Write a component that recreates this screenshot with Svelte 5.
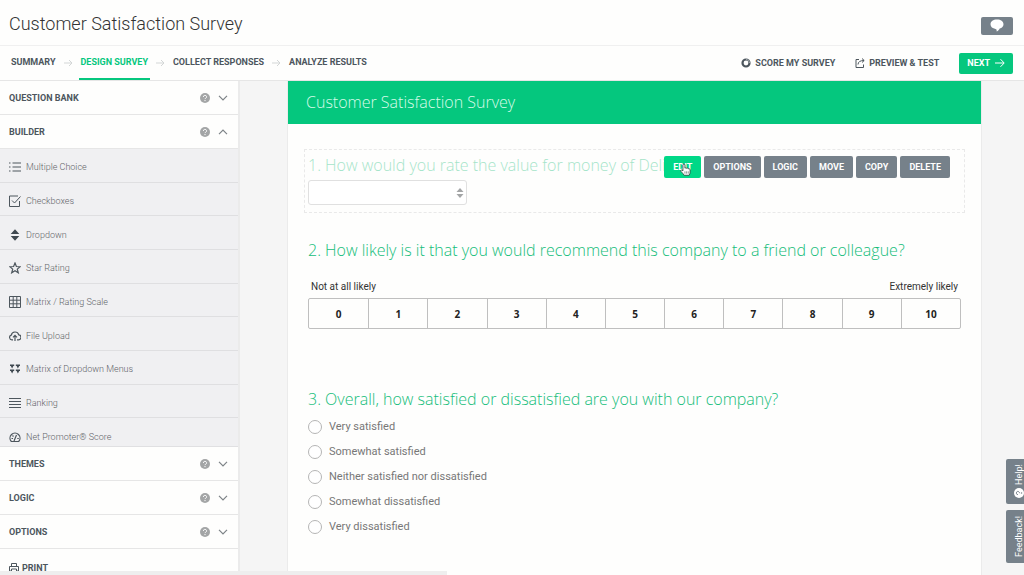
<script lang="ts">
	interface Section {
		id: string;
		title: string;
	}

	let surveyTitle: string = "Customer Satisfaction Survey";
	let steps: string[] = ["Summary", "Design Survey", "Collect Responses", "Analyze Results"];
	let currentStep: string = "Design Survey";

	let questionTypes: Section[] = [
		{ id: "choice", title: "Multiple Choice" },
		{ id: "checkbox", title: "Checkboxes" },
		{ id: "dropdown", title: "Dropdown" },
		{ id: "star", title: "Star Rating" },
		{ id: "matrix", title: "Matrix / Rating Scale" },
		{ id: "upload", title: "File Upload" },
		{ id: "menus", title: "Matrix of Dropdown Menus" },
		{ id: "ranking", title: "Ranking" },
		{ id: "nps", title: "Net Promoter® Score" }
	];

	let lowerSections: string[] = ["Themes", "Logic", "Options"];
	let actions: string[] = ["Edit", "Options", "Logic", "Move", "Copy", "Delete"];
	let scores: number[] = [0, 1, 2, 3, 4, 5, 6, 7, 8, 9, 10];
	let answers: string[] = [
		"Very satisfied",
		"Somewhat satisfied",
		"Neither satisfied nor dissatisfied",
		"Somewhat dissatisfied",
		"Very dissatisfied"
	];

	let builderOpen: boolean = $state(true);
	let score: number | null = $state(null);
	let answer: string | null = $state(null);

	function toggleBuilder(): void {
		builderOpen = !builderOpen;
	}
</script>

{#snippet sectionTools(open: boolean)}
	<svg class="help-icon" viewBox="0 0 10 10" aria-hidden="true">
		<circle cx="5" cy="5" r="5" fill="#a3a5a6" />
		<path d="M3.4 3.9a1.6 1.5 0 1 1 2.3 1.3q-.7.3-.7.9" fill="none" stroke="#fff" stroke-width="1" />
		<circle cx="5" cy="7.6" r=".7" fill="#fff" />
	</svg>
	<svg class="chevron" viewBox="0 0 10 6" aria-hidden="true">
		<path d={open ? "M1 5.2 5 1.2l4 4" : "M1 .8l4 4 4-4"} fill="none" stroke="#7d8387" stroke-width="1.2" />
	</svg>
{/snippet}

<div class="app">
	<header class="title-bar">
		<h1>{surveyTitle}</h1>
		<button class="chat-button" aria-label="Comments">
			<svg viewBox="0 0 14 13" width="14" height="13">
				<path d="M7 .5C3.200.5.5 2.500.5 5.300c0 2.600 2 4.200 5 4.600.9.1 1.200.5 1.200 2.600 1.500-.6 2.300-1.600 3-2.900 2.300-.7 3.800-2.200 3.800-4.300C13.500 2.500 10.800.5 7 .5z" fill="#fff" />
			</svg>
		</button>
	</header>

	<nav class="steps">
		{#each steps as step, i}
			{#if i > 0}
				<svg class="step-arrow" viewBox="0 0 9 8" aria-hidden="true">
					<path d="M0 4h8M5 1l3 3-3 3" fill="none" stroke="#d3d6d6" />
				</svg>
			{/if}
			<a href="#{step}" class="step" class:current={step === currentStep}>{step}</a>
		{/each}
		<div class="nav-actions">
			<button class="nav-action">
				<svg viewBox="0 0 10 10" width="10" height="10">
					<circle cx="5" cy="5" r="3.500" fill="none" stroke="#4d565d" stroke-width="2.200" />
					<path d="M5 1.500A3.500 3.500 0 0 1 8.500 5" fill="none" stroke="#a9afb2" stroke-width="1" />
				</svg>
				Score my survey
			</button>
			<button class="nav-action">
				<svg viewBox="0 0 10 10" width="10" height="10">
					<path d="M4 1.500H1v8h7.500V6.500M3 6.500q.2-4 6-4M7 .5l2.200 2L7 4.500" fill="none" stroke="#4d565d" />
				</svg>
				Preview &amp; test
			</button>
			<button class="next-button">
				Next
				<svg viewBox="0 0 10 10" width="10" height="10">
					<path d="M0 5h9M5.500 1.200 9.200 5 5.500 8.800" fill="none" stroke="#fff" />
				</svg>
			</button>
		</div>
	</nav>

	<div class="workspace">
		<aside class="sidebar">
			<button class="section">
				<span>Question bank</span>
				{@render sectionTools(false)}
			</button>
			<button class="section" aria-expanded={builderOpen} onclick={toggleBuilder}>
				<span>Builder</span>
				{@render sectionTools(builderOpen)}
			</button>

			{#if builderOpen}
				<div class="builder">
					<ul>
						{#each questionTypes as type}
							<li>
								<button class="question-type">
									<svg viewBox="0 0 12 12" width="12" height="12" fill="none" stroke="#4d565d">
										{#if type.id === "choice"}
											<path d="M3.500 2H12M3.500 6H12M3.500 10H12M0 2h1.500M0 6h1.500M0 10h1.500" />
										{:else if type.id === "checkbox"}
											<path d="M10.500 6v5.500H.5V1H9M3 5.500 5.500 8l6-6.500" />
										{:else if type.id === "dropdown"}
											<path d="M6 .2 10.300 5H1.700zM6 11.800 10.300 7H1.700z" fill="#3f4850" stroke="none" />
										{:else if type.id === "star"}
											<path d="m6 1 1.400 3.500 3.800.2-2.900 2.400 1 3.700L6 8.700l-3.300 2.100 1-3.700L.8 4.700l3.800-.2z" stroke-width="1.200" />
										{:else if type.id === "matrix"}
											<path d="M.5.5h11v11H.5zM4.200.5v11M7.800.5v11M.5 4.200h11M.5 7.800h11" />
										{:else if type.id === "upload"}
											<path d="M4 9.800H3a2.400 2.400 0 0 1-.7-4.700A3.800 3.800 0 0 1 9.700 4.800a2.500 2.500 0 0 1-.5 5H8M6 11V5.500M4 7.300l2-2 2 2" stroke-width="1.200" />
										{:else if type.id === "menus"}
											<path d="M1 1.500h4.200v1.600H4.400L3.100 5.500 1.800 3.100H1zM6.800 1.500H11v1.600h-.8L8.900 5.500 7.600 3.100h-.8zM1 6.500h4.200v1.600H4.400l-1.300 2.400-1.300-2.400H1zM6.800 6.500H11v1.600h-.8l-1.300 2.400-1.300-2.400h-.8z" fill="#3f4850" stroke="none" />
										{:else if type.id === "ranking"}
											<path d="M0 1.500h12M0 4.500h12M0 7.500h12M0 10.500h12" />
										{:else}
											<path d="M2.300 10.500a5 5 0 1 1 7.400 0zM5 10 7.500 4M2.500 7.500H4M8.300 7.500h1.500M3.500 4.500l1 1" stroke-width="1.200" />
										{/if}
									</svg>
									{type.title}
								</button>
							</li>
						{/each}
					</ul>
				</div>
			{/if}

			{#each lowerSections as section}
				<button class="section">
					<span>{section}</span>
					{@render sectionTools(false)}
				</button>
			{/each}
			<button class="section print">
				<svg viewBox="0 0 10 10" width="10" height="10" fill="none" stroke="#4d565d">
					<path d="M2.500 3.500v-3h5v3M2.500 8h-2V3.500h9V8h-2M2.500 6h5v3.500h-5z" />
				</svg>
				<span>Print</span>
			</button>
		</aside>

		<main>
			<article class="survey">
				<h2>{surveyTitle}</h2>

				<section class="question editing">
					<h3 id="q1">1. How would you rate the value for money of Deliv</h3>
					<div class="select-box">
						<select aria-labelledby="q1">
							<option></option>
						</select>
						<svg viewBox="0 0 8 12" width="8" height="12" aria-hidden="true">
							<path d="M4 1l3.500 4h-7zM4 11l3.500-4h-7z" fill="#a3a5a6" />
						</svg>
					</div>
					<div class="toolbar">
						{#each actions as action}
							<button class:active={action === "Edit"}>{action}</button>
						{/each}
						<svg class="pointer" viewBox="0 0 12 14" aria-hidden="true">
							<path d="M3.200 8V2.200a1.100 1.100 0 0 1 2.200 0V5.500q1-.8 2 .2 1-.6 1.800.4 1.600-.3 1.800 1.200V10q0 1.500-1 3.300H4.500Q3.500 11.500.8 8.800C.4 7.600 1.600 7 3.200 8.600z" fill="#fff" stroke="#33423c" stroke-width=".9" />
							<path d="M5.400 9v2.500M7.200 9v2.500M9 9v2.500" stroke="#33423c" stroke-width=".6" />
						</svg>
					</div>
				</section>

				<section class="question recommend">
					<h3>2. How likely is it that you would recommend this company to a friend or colleague?</h3>
					<div class="scale-labels">
						<span>Not at all likely</span>
						<span>Extremely likely</span>
					</div>
					<div class="scale">
						{#each scores as value}
							<label>
								<input type="radio" name="score" {value} bind:group={score} />
								{value}
							</label>
						{/each}
					</div>
				</section>

				<section class="question satisfaction">
					<h3>3. Overall, how satisfied or dissatisfied are you with our company?</h3>
					{#each answers as value}
						<label class="answer">
							<input type="radio" name="answer" {value} bind:group={answer} />
							{value}
						</label>
					{/each}
				</section>
			</article>
		</main>
	</div>

	<div class="side-tabs">
		<button class="help-tab">
			<svg viewBox="0 0 10 10" width="10" height="10">
				<circle cx="5" cy="5" r="5" fill="#fff" />
				<path d="M6.100 3.400a1.500 1.600 0 1 1-1.300 2.300Q4.500 5 3.900 5" fill="none" stroke="#76818a" />
				<circle cx="2.400" cy="5" r=".7" fill="#76818a" />
			</svg>
			Help!
		</button>
		<button>Feedback!</button>
	</div>
	<div class="status-bar"></div>
</div>

<style>
	:global(body) {
		background: #fefefd;
	}

	.app {
		height: 100vh;
		display: flex;
		flex-direction: column;
		overflow: hidden;
		font-family: Roboto, "Liberation Sans", sans-serif;
		color: #4d565d;
	}

	h1, h2, h3, ul {
		margin: 0;
		padding: 0;
		font-weight: 300;
	}

	h2, h3 {
		font-family: "Open Sans", "Noto Sans", sans-serif;
	}

	button {
		margin: 0;
		padding: 0;
		border: none;
		background: none;
		color: inherit;
		font: inherit;
		cursor: pointer;
	}

	svg {
		flex: none;
	}

	.title-bar {
		flex: none;
		height: 46px;
		padding: 2px 11px 0 9px;
		box-sizing: border-box;
		display: flex;
		align-items: center;
		justify-content: space-between;
		border-bottom: 1px solid #f0f0f0;
	}

	h1 {
		font-size: 18px;
		color: #333;
	}

	.chat-button {
		width: 32px;
		height: 18px;
		margin-top: 4px;
		display: flex;
		align-items: center;
		justify-content: center;
		border-radius: 2px;
		background: #76818a;
	}

	.steps {
		flex: none;
		height: 35px;
		padding: 0 11px 0 9px;
		box-sizing: border-box;
		display: flex;
		align-items: center;
		border-bottom: 1px solid #e6e6e6;
		font-size: 9px;
		font-weight: 700;
		text-transform: uppercase;
	}

	.step {
		height: 34px;
		padding: 0 2px;
		box-sizing: border-box;
		line-height: 33px;
		color: inherit;
		text-decoration: none;
	}

	.step.current {
		border-bottom: 2px solid #05c77e;
		color: #05c77e;
	}

	.step-arrow {
		width: 9px;
		height: 8px;
		margin: 0 6px;
	}

	.nav-actions {
		margin-left: auto;
		display: flex;
		align-items: center;
	}

	.nav-action {
		margin-right: 20px;
		display: flex;
		align-items: center;
		gap: 4px;
		text-transform: inherit;
	}

	.next-button {
		height: 21px;
		padding: 0 8px;
		display: flex;
		align-items: center;
		gap: 5px;
		border-radius: 2px;
		background: #05c77e;
		color: #fff;
		text-transform: inherit;
	}

	.workspace {
		flex: 1;
		min-height: 0;
		display: flex;
	}

	.sidebar {
		flex: none;
		width: 240px;
		box-sizing: border-box;
		border-right: 2px solid #ebebeb;
		overflow: hidden;
	}

	.section {
		width: 100%;
		height: 34px;
		padding: 0 10px 0 9px;
		display: flex;
		align-items: center;
		border-bottom: 1px solid #e6e6e6;
		font-size: 9px;
		font-weight: 700;
		text-transform: uppercase;
	}

	.section span {
		margin-right: auto;
	}

	.section.print {
		height: 38px;
		gap: 3px;
	}

	.help-icon {
		width: 10px;
		height: 10px;
		margin-right: 8px;
	}

	.chevron {
		width: 10px;
		height: 6px;
	}

	/* the last question type is cut off by the sections below */
	.builder {
		height: 298px;
		overflow: hidden;
		box-sizing: border-box;
		border-bottom: 1px solid #e0e0e2;
		background: #f0f0f2;
	}

	.builder ul {
		height: 303px;
		display: grid;
		grid-template-rows: repeat(9, 1fr);
		list-style: none;
	}

	.builder li {
		border-bottom: 1px solid #dfdfe1;
	}

	.question-type {
		width: 100%;
		height: 100%;
		padding: 4px 9px 0;
		display: flex;
		align-items: center;
		gap: 5px;
		font-size: 9px;
		color: #5f6468;
	}

	main {
		flex: 1;
		padding: 0 42px 0 47px;
		background: #f5f5f5;
	}

	.survey {
		min-height: 100%;
		background: #fefefd;
		border: solid #ebebeb;
		border-width: 0 1px;
	}

	h2 {
		height: 43px;
		padding-left: 18px;
		line-height: 42px;
		background: #05c77e;
		font-size: 16px;
		color: #d7fbe9;
	}

	.question {
		margin: 0 16px;
		padding: 0 4px;
	}

	h3 {
		font-size: 16px;
		line-height: 24px;
		color: #14bd7a;
		white-space: nowrap;
	}

	.editing {
		position: relative;
		height: 62px;
		margin-top: 25px;
		padding: 0 3px;
		border: 1px dashed #e9e9e9;
	}

	.editing h3 {
		padding-top: 3px;
		opacity: 0.4;
	}

	.select-box {
		width: 159px;
		margin-top: 3px;
		display: grid;
		align-items: center;
	}

	.select-box > * {
		grid-area: 1 / 1;
	}

	.select-box svg {
		margin-right: 3px;
		justify-self: end;
		pointer-events: none;
	}

	select {
		width: 100%;
		height: 25px;
		appearance: none;
		border: 1px solid #e0e0e0;
		border-radius: 3px;
		background: #fff;
	}

	.toolbar {
		position: absolute;
		top: 6px;
		right: 14px;
		display: flex;
		gap: 3px;
	}

	.toolbar button {
		height: 22px;
		padding: 0 9px;
		border-radius: 2px;
		background: #76818a;
		font-size: 9px;
		font-weight: 700;
		color: #fff;
		text-transform: uppercase;
	}

	.toolbar button.active {
		background: #00d887;
	}

	.pointer {
		position: absolute;
		top: 7px;
		left: 16px;
		width: 11px;
		height: 13px;
	}

	.recommend {
		margin-top: 25px;
	}

	.scale-labels {
		margin-top: 18px;
		padding: 0 3px;
		display: flex;
		justify-content: space-between;
		font-size: 10px;
		line-height: 14px;
		color: #333;
	}

	.scale {
		height: 31px;
		margin-top: 4px;
		box-sizing: border-box;
		display: grid;
		grid-template-columns: repeat(11, 1fr);
		border: 1px solid #bfbfbf;
		border-radius: 2px;
		font-family: "Open Sans", sans-serif;
		font-size: 10px;
		font-weight: 700;
		color: #222;
	}

	.scale label {
		display: flex;
		align-items: center;
		justify-content: center;
	}

	.scale label + label {
		border-left: 1px solid #bfbfbf;
	}

	.scale input {
		width: 0;
		margin: 0;
		appearance: none;
	}

	.satisfaction {
		margin-top: 58px;
	}

	.satisfaction h3 {
		margin-bottom: 3px;
	}

	.answer {
		height: 25px;
		display: flex;
		align-items: center;
		gap: 7px;
		font-size: 11px;
		color: #777;
	}

	.answer input {
		width: 14px;
		height: 14px;
		margin: 0;
		appearance: none;
		border: 1px solid #b5b5b5;
		border-radius: 50%;
		background: #fff;
	}

	.side-tabs {
		position: fixed;
		right: 0;
		bottom: 12px;
		display: grid;
		gap: 6px;
	}

	.side-tabs button {
		width: 18px;
		height: 53px;
		padding-right: 8px;
		display: flex;
		align-items: center;
		justify-content: center;
		gap: 3px;
		writing-mode: vertical-rl;
		transform: rotate(180deg);
		border-radius: 0 2px 2px 0;
		background: #76818a;
		font-size: 9px;
		line-height: 10px;
		color: #fff;
	}

	.side-tabs .help-tab {
		height: 45px;
	}

	.status-bar {
		position: fixed;
		left: 0;
		bottom: 0;
		width: 447px;
		height: 4px;
		background: #eeeeee;
	}
</style>
